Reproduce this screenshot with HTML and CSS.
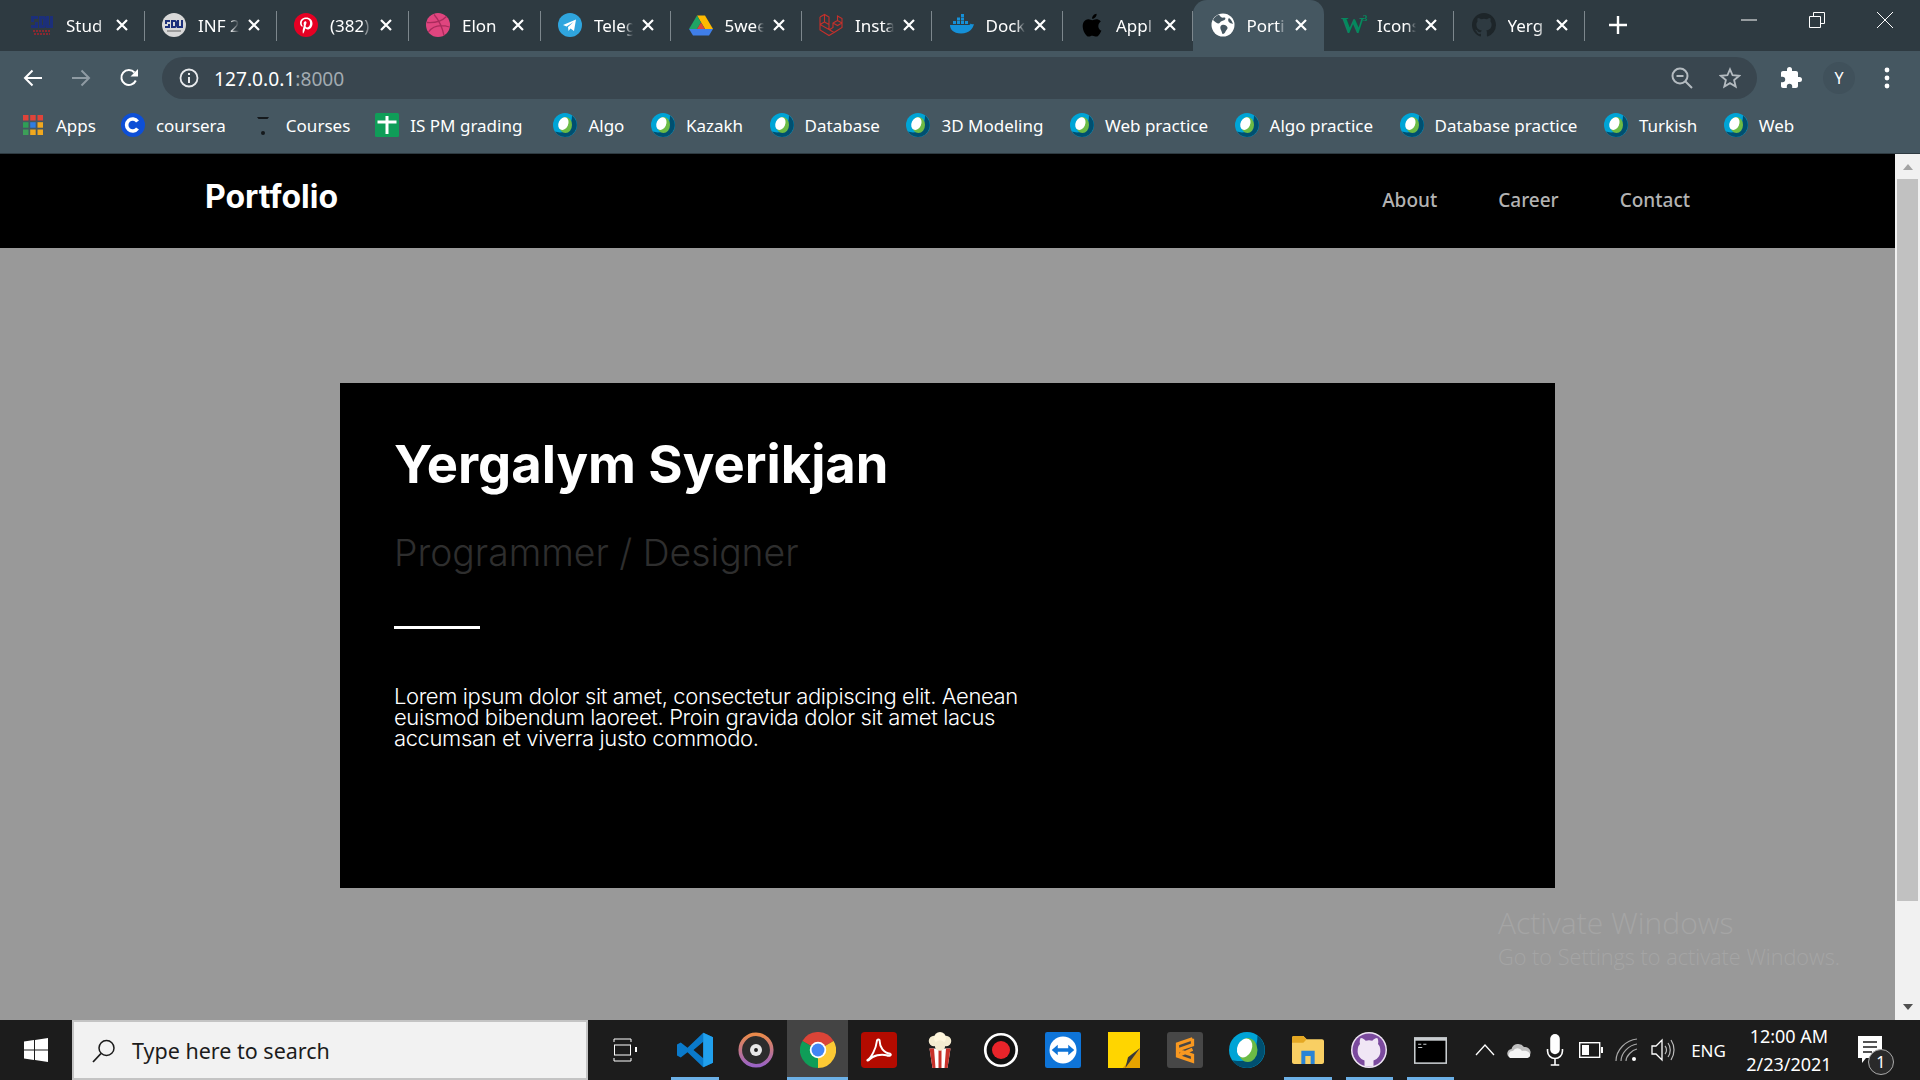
FILE: index.html
```html
<!DOCTYPE html>
<html>
<head>
    <title>Portfolio</title>
    <link rel="stylesheet" href="styles.css">
</head>
<body>
    <svg class="defs" width="0" height="0">
        <symbol id="webex" viewBox="0 0 24 24">
            <circle cx="12" cy="12" r="12" fill="#00a4d6"/>
            <path d="M19 2.400A12 12 0 0 1 12 24 12 12 0 0 1 2 18.600C6 20 13 20 16 15 18 11 19 6 19 2.400Z" fill="#004f70"/>
            <ellipse cx="12.500" cy="12" rx="6.500" ry="8" fill="#6cbb45"/>
            <ellipse cx="10.400" cy="10.600" rx="4.800" ry="6.600" transform="rotate(25 10.400 10.600)" fill="#fff"/>
        </symbol>
        <symbol id="close" viewBox="0 0 14 14">
            <path d="M2 2 12 12M12 2 2 12" stroke="#fff" stroke-width="2.200" fill="none"/>
        </symbol>
        <symbol id="sdu" viewBox="0 0 24 24">
            <path d="M1 3H8V6H4V9H8V15H1V12H5V9H1ZM9 3H14C16 3 16 5 16 6V12C16 14 15 15 14 15H9ZM12 6V12H13V6ZM16 3H19V12H20V3H23V15H16Z" fill="#1c2f7a"/>
            <path d="M3 18H21M4 21H20" stroke="#a8242c" stroke-width="1.400" stroke-dasharray="2 1"/>
        </symbol>
    </svg>

    <header class="browser">
        <div class="tabstrip">
            <div class="tab tab-wide">
                <svg class="favicon"><use href="#sdu"/></svg>
                <span class="tab-title">Stud</span>
                <svg class="tab-close"><use href="#close"/></svg>
            </div>
            <div class="tab tab-wide">
                <svg class="favicon" viewBox="0 0 24 24"><circle cx="12" cy="12" r="12" fill="#d8d8d8"/><path d="M3 7H8V9H5V11H8V15H3V13H6V11H3ZM9 7H13C14 7 15 8 15 9V13C15 14 14 15 13 15H9ZM11 9V13H13V9ZM15 7H17V13H19V7H21V15H15Z" fill="#1c2f7a"/><path d="M5 18H19" stroke="#8a8a8a" stroke-width="1.500"/></svg>
                <span class="tab-title">INF 2</span>
                <svg class="tab-close"><use href="#close"/></svg>
            </div>
            <div class="tab tab-wide">
                <svg class="favicon" viewBox="0 0 24 24"><circle cx="12" cy="12" r="12" fill="#e60023"/><path d="M12.400 4.500C8.200 4.500 6 7.200 6 10.100c0 1.400.8 3.100 2 3.600.4.200.4 0 .6-.8 0-.2 0-.3-.2-.5-.4-.5-.7-1.300-.7-2.200 0-2.100 1.600-4.100 4.400-4.100 2.400 0 4 1.600 4 3.900 0 2.600-1.300 4.400-3 4.400-1 0-1.700-.8-1.400-1.800.3-1.100.8-2.300.8-3.100 0-.7-.4-1.300-1.200-1.300-1 0-1.700 1-1.700 2.300 0 .8.3 1.400.3 1.400l-1.100 4.700c-.2.900-.1 2.600 0 3.700.1.200.3.200.4.100.3-.4 1.200-1.800 1.500-2.900l.6-2.200c.3.600 1.200 1.100 2.200 1.100 2.900 0 5-2.700 5-6C18.500 6.900 15.800 4.500 12.400 4.500Z" fill="#fff"/></svg>
                <span class="tab-title">(382)</span>
                <svg class="tab-close"><use href="#close"/></svg>
            </div>
            <div class="tab tab-wide">
                <svg class="favicon" viewBox="0 0 24 24"><circle cx="12" cy="12" r="12" fill="#e0457f"/><path d="M8 1.500C12 6 16 13 18 22.500M1 9.500C8 10 16 8 20.500 3.500M2.500 19C6 14 13 11 23.500 14" stroke="#a92b5c" stroke-width="1.300" fill="none"/></svg>
                <span class="tab-title">Elon</span>
                <svg class="tab-close"><use href="#close"/></svg>
            </div>
            <div class="tab">
                <svg class="favicon" viewBox="0 0 24 24"><circle cx="12" cy="12" r="12" fill="#2fa5de"/><path d="M5 12 18 6.500 16 18 12.500 15.500 10.500 18 10 14 15.500 9 8.500 13.500Z" fill="#fff"/></svg>
                <span class="tab-title">Teleg</span>
                <svg class="tab-close"><use href="#close"/></svg>
            </div>
            <div class="tab">
                <svg class="favicon" viewBox="0 0 24 24"><path d="M8 2.500H16L24 16H16Z" fill="#ffba00"/><path d="M0 16H24L20 22.500H4Z" fill="#3f7ee8"/><path d="M8 2.500 12 9.500 8 16H0Z" fill="#1fa463"/><path d="M8 16H16L12 9.500Z" fill="#d9483b"/></svg>
                <span class="tab-title">5wee</span>
                <svg class="tab-close"><use href="#close"/></svg>
            </div>
            <div class="tab">
                <svg class="favicon" viewBox="0 0 24 24"><path d="M1 4 5.500 1.500 10 4V16.500L15 19.500 23 14.500V10L18.500 7.500 14 10V14.500L10 17M10 16.500 1 11.500V4M5.500 1.500V9L1 11.500M5.500 9 10 11.500M15 19.500 10 22.500 1 17V11.500M23 10 18.500 12.500 14 10M18.500 7.500V3L23 5.500V10" stroke="#c5302b" stroke-width="1.100" fill="none"/></svg>
                <span class="tab-title">Insta</span>
                <svg class="tab-close"><use href="#close"/></svg>
            </div>
            <div class="tab">
                <svg class="favicon" viewBox="0 0 24 24"><path d="M0 12H19C20 12 20.500 11 20.500 10.500 22 11.500 23.500 11.500 24 11 23 15 20 20.500 11 20.500 3 20.500 0 16 0 12Z" fill="#1590d8"/><path d="M3 8H6V11H3ZM7 8H10V11H7ZM11 8H14V11H11ZM7 4.500H10V7.500H7ZM11 4.500H14V7.500H11ZM11 1H14V4H11ZM15 8H18V11H15Z" fill="#1590d8"/></svg>
                <span class="tab-title">Dock</span>
                <svg class="tab-close"><use href="#close"/></svg>
            </div>
            <div class="tab">
                <svg class="favicon" viewBox="3.500 2.500 16 19"><path d="M16.500 12.700C16.500 10.400 18.400 9.300 18.500 9.200 17.400 7.700 15.800 7.400 15.200 7.400 13.800 7.300 12.400 8.200 11.700 8.200 11 8.200 9.900 7.400 8.700 7.400 7.100 7.500 5.700 8.300 4.900 9.700 3.300 12.500 4.500 16.700 6 18.900 6.800 20 7.700 21.200 8.900 21.200 10 21.100 10.500 20.500 11.900 20.500 13.200 20.500 13.700 21.200 14.900 21.200 16.100 21.200 16.900 20 17.700 18.900 18.500 17.700 18.900 16.500 19 16.400 18.900 16.400 16.500 15.500 16.500 12.700ZM14.200 5.900C14.800 5.100 15.300 4 15.100 3 14.200 3 13.100 3.600 12.500 4.400 11.900 5 11.400 6.100 11.600 7.100 12.600 7.200 13.600 6.600 14.200 5.900Z" fill="#000"/></svg>
                <span class="tab-title">Appl</span>
                <svg class="tab-close"><use href="#close"/></svg>
            </div>
            <div class="tab tab-active">
                <svg class="favicon" viewBox="0 0 24 24"><circle cx="12" cy="12" r="11.500" fill="#fff"/><path d="M8 1.500C9 4 11 5 13 4.500 14.500 4 15 5.500 13.500 7 12 8 10 8 9 9.500 8 11 6.500 10.500 5 9.500 3.500 8.500 2.500 7.500 2 7 3 4.500 5.500 2.500 8 1.500ZM11 12C13 11 16 12.500 16.500 14.500 17 16 15 17 14.500 18.500 14 20 12.500 21.500 11.500 21 10.500 19 10.500 17.500 9.500 16 9 14 9.500 12.500 11 12ZM18 5C20 6.500 21.500 9 22 11 20.500 10.500 18.500 10 17.500 8.500 17 7 17 6 18 5Z" fill="#455761"/></svg>
                <span class="tab-title">Porti</span>
                <svg class="tab-close"><use href="#close"/></svg>
            </div>
            <div class="tab">
                <span class="favicon w3-logo">W<sup>3</sup></span>
                <span class="tab-title">Icons</span>
                <svg class="tab-close"><use href="#close"/></svg>
            </div>
            <div class="tab">
                <svg class="favicon" viewBox="0 0 24 24"><path d="M12 0C5.400 0 0 5.400 0 12c0 5.300 3.400 9.800 8.200 11.400.6.100.8-.3.8-.6v-2c-3.300.7-4-1.600-4-1.600-.5-1.400-1.300-1.800-1.300-1.800-1.100-.7.1-.7.1-.7 1.200.1 1.800 1.200 1.800 1.200 1.100 1.800 2.800 1.300 3.500 1 .1-.8.4-1.300.8-1.600-2.700-.3-5.500-1.300-5.500-5.900 0-1.300.5-2.400 1.200-3.200-.1-.3-.5-1.500.1-3.200 0 0 1-.3 3.300 1.200a11.500 11.500 0 0 1 6 0C17.300 4.700 18.300 5 18.300 5c.7 1.700.2 2.900.1 3.200.8.800 1.200 1.900 1.200 3.200 0 4.600-2.800 5.600-5.500 5.900.4.400.8 1.100.8 2.200v3.300c0 .3.200.7.8.6A12 12 0 0 0 24 12C24 5.400 18.600 0 12 0Z" fill="#1d2529"/></svg>
                <span class="tab-title">Yerg</span>
                <svg class="tab-close"><use href="#close"/></svg>
            </div>
            <svg class="new-tab" viewBox="0 0 18 18"><path d="M9 0V18M0 9H18" stroke="#fff" stroke-width="2.400"/></svg>
            <div class="window-btns">
                <svg viewBox="0 0 16 16"><path d="M0 8H16" stroke="#fff"/></svg>
                <svg viewBox="0 0 16 16"><path d="M.5 4.500H11.500V15.500H.5ZM4.500 4.500V.5H15.500V11.500H11.500" stroke="#fff" fill="none"/></svg>
                <svg viewBox="0 0 16 16"><path d="M0 0 16 16M16 0 0 16" stroke="#fff"/></svg>
            </div>
        </div>

        <div class="toolbar">
            <svg class="nav-icon" viewBox="0 0 20 20"><path d="M19 10H2M9.500 2.500 2 10 9.500 17.500" stroke="#fff" stroke-width="2" fill="none"/></svg>
            <svg class="nav-icon" viewBox="0 0 20 20"><path d="M1 10H18M10.500 2.500 18 10 10.500 17.500" stroke="#8f9ba3" stroke-width="2" fill="none"/></svg>
            <svg class="nav-icon" viewBox="0 0 20 20"><path d="M16.800 12.500A7.500 7.500 0 1 1 15.500 4.500" stroke="#fff" stroke-width="2" fill="none"/><path d="M11.500 8.500H19V1Z" fill="#fff"/></svg>
            <div class="omnibox">
                <svg class="omni-info" viewBox="0 0 20 20"><circle cx="10" cy="10" r="8.500" stroke="#e8eaed" stroke-width="1.800" fill="none"/><path d="M10 9V15M10 5V7" stroke="#e8eaed" stroke-width="2"/></svg>
                <span class="url">127.0.0.1<span class="url-port">:8000</span></span>
                <svg class="omni-icon" viewBox="0 0 22 22"><circle cx="9" cy="9" r="7.500" stroke="#b4bbc0" stroke-width="2" fill="none"/><path d="M5.500 9H12.500M14.500 14.500 21 21" stroke="#b4bbc0" stroke-width="2" fill="none"/></svg>
                <svg class="omni-icon" viewBox="0 0 24 24"><path d="M12 2.500 14.800 9 22 9.600 16.500 14.300 18.200 21.300 12 17.600 5.800 21.300 7.500 14.300 2 9.600 9.200 9Z" stroke="#b4bbc0" stroke-width="2" fill="none"/></svg>
            </div>
            <svg class="puzzle" viewBox="0 0 24 24"><path d="M20.500 11H19V7c0-1.100-.9-2-2-2h-4V3.500a2.500 2.500 0 0 0-5 0V5H4c-1.100 0-2 .9-2 2v3.800h1.500a2.700 2.700 0 0 1 0 5.400H2V20c0 1.100.9 2 2 2h3.800v-1.500a2.700 2.700 0 0 1 5.400 0V22H17c1.100 0 2-.9 2-2v-4h1.500a2.500 2.500 0 0 0 0-5Z" fill="#fff"/></svg>
            <span class="avatar">Y</span>
            <svg class="menu-dots" viewBox="0 0 6 22"><circle cx="3" cy="3" r="2.400" fill="#fff"/><circle cx="3" cy="11" r="2.400" fill="#fff"/><circle cx="3" cy="19" r="2.400" fill="#fff"/></svg>
        </div>

        <div class="bookmarks">
            <div class="bookmark">
                <svg class="bm-icon" viewBox="0 0 24 24"><g fill="#e0443a"><rect x="2" y="2" width="5.500" height="5.500"/><rect x="9.200" y="2" width="5.500" height="5.500"/><rect x="16.500" y="2" width="5.500" height="5.500"/></g><rect x="2" y="9.200" width="5.500" height="5.500" fill="#2f9e56"/><rect x="9.200" y="9.200" width="5.500" height="5.500" fill="#2f7de1"/><rect x="16.500" y="9.200" width="5.500" height="5.500" fill="#f0a81e"/><rect x="2" y="16.500" width="5.500" height="5.500" fill="#3c9f58"/><rect x="9.200" y="16.500" width="5.500" height="5.500" fill="#f0a81e"/><rect x="16.500" y="16.500" width="5.500" height="5.500" fill="#f0a81e"/></svg>
                <span>Apps</span>
            </div>
            <div class="bookmark">
                <svg class="bm-icon" viewBox="0 0 24 24"><circle cx="12" cy="12" r="12" fill="#0e4fd6"/><path d="M16.500 8.500A6 6 0 1 0 16.500 15.500" stroke="#fff" stroke-width="3.600" fill="none"/></svg>
                <span>coursera</span>
            </div>
            <div class="bookmark">
                <svg class="bm-icon" viewBox="0 0 24 24"><path d="M6 4H18L16.500 6H7.500Z" fill="#15191c"/><circle cx="12" cy="20" r="2" fill="#15191c"/></svg>
                <span>Courses</span>
            </div>
            <div class="bookmark">
                <svg class="bm-icon" viewBox="0 0 24 24"><rect width="24" height="24" rx="1.500" fill="#0f9d58"/><path d="M12 3V21M2.500 9H21.500" stroke="#fff" stroke-width="3"/></svg>
                <span>IS PM grading</span>
            </div>
            <div class="bookmark bookmark-first"><svg class="bm-icon"><use href="#webex"/></svg><span>Algo</span></div>
            <div class="bookmark bookmark-web"><svg class="bm-icon"><use href="#webex"/></svg><span>Kazakh</span></div>
            <div class="bookmark bookmark-web"><svg class="bm-icon"><use href="#webex"/></svg><span>Database</span></div>
            <div class="bookmark bookmark-web"><svg class="bm-icon"><use href="#webex"/></svg><span>3D Modeling</span></div>
            <div class="bookmark bookmark-web"><svg class="bm-icon"><use href="#webex"/></svg><span>Web practice</span></div>
            <div class="bookmark bookmark-web"><svg class="bm-icon"><use href="#webex"/></svg><span>Algo practice</span></div>
            <div class="bookmark bookmark-web"><svg class="bm-icon"><use href="#webex"/></svg><span>Database practice</span></div>
            <div class="bookmark bookmark-web"><svg class="bm-icon"><use href="#webex"/></svg><span>Turkish</span></div>
            <div class="bookmark bookmark-web"><svg class="bm-icon"><use href="#webex"/></svg><span>Web</span></div>
        </div>
    </header>

    <div class="viewport">
        <div class="page">
            <nav class="navbar">
                <a class="brand">Portfolio</a>
                <div class="nav-links">
                    <a>About</a>
                    <a>Career</a>
                    <a>Contact</a>
                </div>
            </nav>
            <section class="card">
                <h1>Yergalym Syerikjan</h1>
                <h2>Programmer / Designer</h2>
                <div class="divider"></div>
                <p>Lorem ipsum dolor sit amet, consectetur adipiscing elit. Aenean euismod bibendum laoreet. Proin gravida dolor sit amet lacus accumsan et viverra justo commodo.</p>
            </section>
        </div>
        <div class="scrollbar">
            <span class="arrow-up"></span>
            <div class="thumb"></div>
            <span class="arrow-down"></span>
        </div>
        <div class="activate">
            <div class="activate-title">Activate Windows</div>
            <div class="activate-sub">Go to Settings to activate Windows.</div>
        </div>
    </div>

    <footer class="taskbar">
        <div class="start">
            <svg viewBox="0 0 24 24"><path d="M0 3.400 10 2V11.500H0ZM11 1.900 24 0V11.500H11ZM0 12.500H10V22L0 20.600ZM11 12.500H24V24L11 22.100Z" fill="#fff"/></svg>
        </div>
        <div class="search">
            <svg viewBox="0 0 24 24"><circle cx="14.500" cy="9" r="7.500" stroke="#1a1a1a" stroke-width="1.500" fill="none"/><path d="M9 14.500 1 23" stroke="#1a1a1a" stroke-width="1.800"/></svg>
            <span>Type here to search</span>
        </div>
        <div class="task task-view">
            <svg viewBox="0 0 24 24"><path d="M1 4V1H18V4M1 20V23H18V20" stroke="#fff" fill="none"/><rect x="1.500" y="7" width="16" height="10" stroke="#fff" fill="none"/><rect x="22" y="9" width="2" height="5" fill="#fff"/></svg>
        </div>
        <div class="task running">
            <svg viewBox="0 0 24 24"><path d="M17.500.5 24 3.500V20.500L17.500 23.500 7 13.500 2.500 17 0 15.700V8.300L2.500 7 7 10.500ZM17.500 6.500 11 12 17.500 17.500Z" fill="#0a7acb"/><path d="M17.500.5 24 3.500V20.500L17.500 23.500Z" fill="#21a0ed"/></svg>
        </div>
        <div class="task">
            <svg viewBox="0 0 24 24"><defs><linearGradient id="ring" x1="0" y1="0" x2="0" y2="1"><stop offset="0" stop-color="#ea8a4a"/><stop offset="1" stop-color="#9a63c5"/></linearGradient></defs><circle cx="12" cy="12" r="10.500" stroke="url(#ring)" stroke-width="2.400" fill="#2c2c2c"/><circle cx="12" cy="12" r="4" fill="#e8e8e8"/><circle cx="12" cy="12" r="1.300" fill="#222"/></svg>
        </div>
        <div class="task running active">
            <svg viewBox="0 0 24 24"><path d="M12 12 22.400 6A12 12 0 0 0 1.600 6Z" fill="#db4437"/><path d="M12 12 1.600 6A12 12 0 0 0 12 24Z" fill="#0f9d58"/><path d="M12 12V24A12 12 0 0 0 22.400 6Z" fill="#fcc934"/><circle cx="12" cy="12" r="5.500" fill="#fff"/><circle cx="12" cy="12" r="4.300" fill="#4285f4"/></svg>
        </div>
        <div class="task">
            <svg viewBox="0 0 24 24"><rect width="24" height="24" rx="2.500" fill="#b30b00"/><path d="M4.500 18.500C7 17 10 11 10.500 6.500 10.700 4.500 12.500 4.500 12.500 6.500 12.500 10 15 14 19.500 14.500 20.500 15 19.500 16.500 17 15.500 13.500 14.500 8 15.500 5.500 18.500 4.500 19.500 3.800 19 4.500 18.500Z" stroke="#fff" stroke-width="1.300" fill="none"/></svg>
        </div>
        <div class="task">
            <svg viewBox="0 0 24 24"><path d="M5 11H19L17 24H7Z" fill="#fff"/><path d="M5 11H8L9 24H7ZM11 11H13V24H11ZM16 11H19L17 24H15Z" fill="#c8322b"/><circle cx="8" cy="6" r="3.500" fill="#f5ecd0"/><circle cx="16" cy="6" r="3.500" fill="#f5ecd0"/><circle cx="12" cy="4" r="4" fill="#fff6dc"/><circle cx="12" cy="9" r="3.500" fill="#f5ecd0"/></svg>
        </div>
        <div class="task">
            <svg viewBox="0 0 24 24"><circle cx="12" cy="12" r="10.500" fill="#111" stroke="#fff" stroke-width="1.800"/><circle cx="12" cy="12" r="6" fill="#e8242a"/></svg>
        </div>
        <div class="task">
            <svg viewBox="0 0 24 24"><rect width="24" height="24" rx="1.500" fill="#0e74d8"/><circle cx="12" cy="12" r="9" fill="#fff"/><path d="M4.500 12 8.500 8.500V10.800H15.500V8.500L19.500 12 15.500 15.500V13.200H8.500V15.500Z" fill="#0e74d8"/></svg>
        </div>
        <div class="task">
            <svg class="icon-sticky" viewBox="0 0 24 27"><path d="M0 0H24V14L14 27H0Z" fill="#ffd500"/><path d="M24 12V27H11Z" fill="#e6a300"/><path d="M24 12 13 27 15 19Z" fill="#3a3a3a"/></svg>
        </div>
        <div class="task">
            <svg viewBox="0 0 24 24"><rect width="24" height="24" rx="2" fill="#474747"/><path d="M17 4.500 7 8V12L17 15.500V19.500L7 16V12.500M17 4.500V8.500L7 12M17 11.500 7 16" stroke="#f89820" stroke-width="2.200" fill="none"/></svg>
        </div>
        <div class="task"><svg><use href="#webex"/></svg></div>
        <div class="task running">
            <svg class="icon-folder" viewBox="0 0 24 21"><path d="M0 1.500C0 .5.800 0 1.500 0H8.500L11 2.500H22.500C23.300 2.500 24 3 24 4V19.500C24 20.500 23.300 21 22.500 21H1.500C.8 21 0 20.500 0 19.500Z" fill="#f9cf63"/><path d="M0 1.500C0 .5.800 0 1.500 0H8.500L11 2.500 8.500 5H0Z" fill="#e5a823"/><path d="M7 21V11H17V21H14V15H10V21Z" fill="#2a84d6"/></svg>
        </div>
        <div class="task running">
            <svg viewBox="0 0 24 24"><circle cx="12" cy="12" r="12" fill="#f0e6f5"/><circle cx="12" cy="12" r="11" fill="#7b4a9e"/><path d="M9 23V19C6 18 4 15.500 4.500 11.500 4.700 10 5 9 6 8 5.500 6.500 6 4.500 6.500 4 8 4 9 5 9.800 5.800A9 9 0 0 1 14.200 5.800C15 5 16 4 17.500 4 18 4.500 18.500 6.500 18 8 19 9 19.300 10 19.500 11.500 20 15.500 18 18 15 19V23Z" fill="#f0e6f5"/></svg>
        </div>
        <div class="task running">
            <svg class="icon-cmd" viewBox="0 0 32 26"><rect width="32" height="26" fill="#c9cdd0"/><rect x="1.500" y="3.500" width="29" height="21" fill="#000"/><path d="M4 7H7M9 7H12M4 10H8" stroke="#c9cdd0"/></svg>
        </div>
        <div class="tray">
            <svg class="tray-caret" viewBox="0 0 20 12"><path d="M1 11 10 1 19 11" stroke="#fff" stroke-width="1.300" fill="none"/></svg>
            <svg class="tray-icon" viewBox="0 0 24 18"><path d="M5 17A4.500 4.500 0 0 1 4.500 8 7 7 0 0 1 17 6 5.500 5.500 0 0 1 19 17Z" fill="#bfbfbf"/><path d="M3 17A4 4 0 0 1 6 10 5 5 0 0 1 15 10C20 9 24 12 23 15 22.500 16.500 21 17 19 17Z" fill="#f4f4f4"/></svg>
            <svg class="tray-icon tray-mic" viewBox="0 0 16 30"><rect x="3.500" y="0" width="9" height="19" rx="4.500" fill="#fff"/><path d="M1 14V16A7 7 0 0 0 15 16V14M8 23V29M4 29H12" stroke="#fff" stroke-width="1.500" fill="none"/></svg>
            <svg class="tray-icon" viewBox="0 0 24 16"><rect x=".7" y=".7" width="20" height="14.600" stroke="#fff" stroke-width="1.400" fill="none"/><rect x="3" y="3" width="7" height="10" fill="#fff"/><rect x="22" y="5" width="2" height="6" fill="#fff"/></svg>
            <svg class="tray-icon" viewBox="0 0 24 24"><path d="M1 23C1 12 11 2 22 1M6 23C6 15 14 7 22 6M11 23C11 18 17 12 22 11" stroke="#a8a8a8" stroke-width="1.200" fill="none"/><circle cx="19" cy="21" r="2" fill="#fff"/></svg>
            <svg class="tray-icon" viewBox="0 0 24 24"><path d="M1 8H5L11 2V22L5 16H1Z" stroke="#fff" stroke-width="1.300" fill="none"/><path d="M14 8C16 10 16 14 14 16M17 5C20 9 20 15 17 19M20 2C24 8 24 16 20 22" stroke="#bdbdbd" stroke-width="1.200" fill="none"/></svg>
            <span class="tray-lang">ENG</span>
            <div class="clock">
                <div>12:00 AM</div>
                <div>2/23/2021</div>
            </div>
            <div class="notify">
                <svg viewBox="0 0 24 28"><path d="M0 0H24V22H8L4 27V22H0Z" fill="#fff"/><path d="M5 6H19M5 11H19M5 16H14" stroke="#1c1c1c" stroke-width="1.500"/></svg>
                <span class="notify-badge">1</span>
            </div>
        </div>
    </footer>
</body>
</html>
```

FILE: styles.css
```css
* {
    box-sizing: border-box;
}
html, body {
    margin: 0;
    height: 100%;
}
body {
    display: flex;
    flex-direction: column;
    height: 1080px;
    overflow: hidden;
    font-family: 'Noto Sans', sans-serif;
    color: #fff;
    background: #999;
}
.defs {
    position: absolute;
}

/* browser chrome */
.tabstrip {
    display: flex;
    height: 51px;
    padding-left: 12.5px;
    background: #2e3a41;
}
.tab {
    position: relative;
    display: flex;
    align-items: center;
    gap: 12px;
    width: 130.5px;
    flex: none;
    padding: 0 16px 1px 17.5px;
    font-size: 17px;
}
.tab-wide {
    width: 132px;
}
.tab::after {
    content: "";
    position: absolute;
    right: 0;
    top: 11px;
    height: 30px;
    width: 1px;
    background: #7d878d;
}
.tab-active {
    background: #455761;
    border-radius: 14px 14px 0 0;
}
.tab-active::after {
    display: none;
}
.favicon {
    width: 24px;
    height: 24px;
    flex: none;
}
.w3-logo {
    color: #04895f;
    font: bold 24px/24px 'Liberation Serif', serif;
}
.w3-logo sup {
    font-size: 9px;
    line-height: 0;
    vertical-align: 12px;
    margin-left: -2px;
}
.tab-title {
    flex: 1;
    min-width: 0;
    margin-right: -4px;
    overflow: hidden;
    white-space: nowrap;
    -webkit-mask-image: linear-gradient(to right, #000 78%, transparent);
}
.tab-close {
    width: 14px;
    height: 14px;
    flex: none;
}
.new-tab {
    width: 18px;
    height: 18px;
    margin: 16px 0 0 24px;
}
.window-btns {
    display: flex;
    gap: 52px;
    margin-left: auto;
    padding: 12px 27px 0 0;
}
.window-btns svg {
    width: 16px;
    height: 16px;
}

.toolbar {
    display: flex;
    align-items: center;
    height: 48px;
    padding: 6px 0 0 23px;
    background: #455761;
}
.nav-icon {
    width: 20px;
    height: 20px;
    margin-right: 28px;
}
.omnibox {
    display: flex;
    align-items: center;
    gap: 26px;
    width: 1595px;
    height: 42px;
    margin-left: -5px;
    padding: 0 16px 0 17px;
    border-radius: 21px;
    background: #39464f;
}
.omni-info {
    width: 20px;
    height: 20px;
    margin-right: -11px;
}
.url {
    flex: 1;
    font-size: 19.2px;
}
.url-port {
    color: #a2abb1;
}
.omni-icon {
    width: 22px;
    height: 22px;
}
.puzzle {
    width: 24px;
    height: 24px;
    margin-left: 22px;
}
.avatar {
    width: 32px;
    height: 32px;
    margin-left: 20px;
    border-radius: 50%;
    background: #40515b;
    text-align: center;
    font-size: 16px;
    line-height: 32px;
}
.menu-dots {
    width: 6px;
    height: 22px;
    margin-left: 29px;
}
.bookmarks {
    display: flex;
    align-items: center;
    gap: 25px;
    height: 55px;
    padding: 0 0 2px 21px;
    background: #455761;
    border-bottom: 1px solid #2e3a41;
    font-size: 17px;
}
.bookmark {
    display: flex;
    align-items: center;
    gap: 11px;
}
.bookmark-first {
    margin-left: 6px;
}
.bookmark-web {
    margin-left: 1.5px;
}
.bm-icon {
    width: 24px;
    height: 24px;
}

/* page */
.viewport {
    position: relative;
    display: flex;
    flex: 1;
    min-height: 0;
}
.page {
    flex: 1;
    background: #999;
}
.navbar {
    display: flex;
    align-items: center;
    justify-content: space-between;
    height: 94px;
    padding: 0 205px 6px;
    background: #000;
}
.brand {
    margin-bottom: 3px;
    font-family: 'Inter', sans-serif;
    font-weight: 700;
    font-size: 32px;
}
.nav-links {
    display: flex;
    gap: 61px;
    padding-top: 3px;
    color: #b3b3b3;
    font-size: 19px;
    font-weight: 500;
}
.card {
    width: 1215px;
    height: 505px;
    margin: 135px auto 0;
    padding: 49px 54px 0;
    background: #000;
    font-family: 'Inter', sans-serif;
}
.card h1 {
    margin: 0;
    font-size: 52.5px;
    line-height: 64px;
    font-weight: 700;
}
.card h2 {
    margin: 35px 0 0;
    color: #2e2e2e;
    font-size: 37.3px;
    line-height: 44px;
    font-weight: 300;
}
.divider {
    width: 86px;
    height: 3px;
    margin-top: 51px;
    background: #fff;
}
.card p {
    width: 640px;
    margin: 57px 0 0;
    font-size: 22px;
    line-height: 21px;
    font-weight: 300;
    letter-spacing: -0.38px;
}
.scrollbar {
    position: relative;
    width: 25px;
    flex: none;
    background: #f1f1f1;
}
.arrow-up, .arrow-down {
    position: absolute;
    left: 8px;
    border-left: 5px solid transparent;
    border-right: 5px solid transparent;
}
.arrow-up {
    top: 10px;
    border-bottom: 6px solid #a3a3a3;
}
.arrow-down {
    bottom: 10px;
    border-top: 6px solid #505050;
}
.thumb {
    position: absolute;
    top: 25px;
    left: 2px;
    right: 2px;
    height: 722px;
    background: #c1c1c1;
}
.activate {
    position: absolute;
    left: 1498px;
    top: 751px;
    font-family: 'Open Sans', sans-serif;
    font-weight: 300;
    color: #a5a5a5;
}
.activate-title {
    font-size: 30px;
    line-height: 36px;
}
.activate-sub {
    margin-top: 3px;
    font-size: 21.7px;
    line-height: 26px;
}

/* windows taskbar */
.taskbar {
    display: flex;
    align-items: stretch;
    height: 60px;
    flex: none;
    background: #1c1c1c;
}
.start {
    display: flex;
    align-items: center;
    justify-content: center;
    width: 72px;
}
.start svg {
    width: 24px;
    height: 24px;
}
.search {
    display: flex;
    align-items: center;
    gap: 16px;
    width: 516px;
    margin-right: 6px;
    padding: 1px 0 0 18px;
    background: #f2f2f2;
    border: 2px solid #c4c4c4;
    color: #1c1c1c;
    font-size: 21.5px;
}
.search svg {
    width: 24px;
    height: 24px;
}
.task {
    position: relative;
    display: flex;
    align-items: center;
    justify-content: center;
    width: 61.3px;
    flex: none;
}
.task svg {
    width: 36px;
    height: 36px;
}
.task-view {
    margin-right: 9px;
}
.task .icon-sticky {
    width: 32px;
}
.task .icon-folder {
    width: 32px;
    height: 28px;
}
.task .icon-cmd {
    width: 33px;
    height: 27px;
}
.task-view svg {
    width: 24px;
    height: 24px;
}
.running::after {
    content: "";
    position: absolute;
    left: 7px;
    right: 7px;
    bottom: 0;
    height: 3px;
    background: #6cb0e6;
}
.active {
    background: #444;
}
.active::after {
    left: 0;
    right: 0;
}
.tray {
    display: flex;
    align-items: center;
    gap: 12px;
    margin-left: 14px;
}
.tray-caret {
    width: 20px;
    height: 12px;
}
.tray-icon {
    width: 24px;
    height: 24px;
}
.tray-icon.tray-mic {
    height: 32px;
}
.tray-lang {
    margin-left: 4px;
    font-size: 17px;
}
.clock {
    width: 92px;
    margin-left: 5px;
    text-align: center;
    font-size: 18px;
    line-height: 28px;
}
.notify {
    position: relative;
    margin-left: 11px;
}
.notify svg {
    display: block;
    width: 24px;
    height: 28px;
}
.notify-badge {
    position: absolute;
    left: 10px;
    top: 13px;
    width: 26px;
    height: 26px;
    border-radius: 50%;
    border: 1px solid #aaa;
    background: #2a2a2a;
    text-align: center;
    font-size: 16px;
    line-height: 24px;
}
```
